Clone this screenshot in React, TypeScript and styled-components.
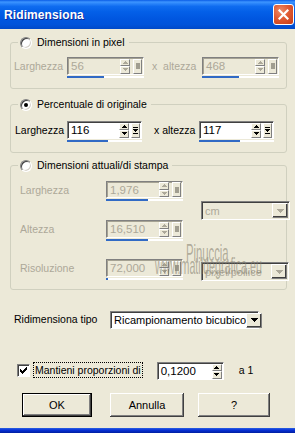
import React from 'react';
import styled, { createGlobalStyle } from 'styled-components';

const GRAY = '#ACA899';

const GlobalStyle = createGlobalStyle`
  html, body { margin: 0; padding: 0; background: #ECE9D8; }
  body { font-family: 'Liberation Sans', Arial, sans-serif; font-size: 10.5px; color: #000; }
  * { box-sizing: border-box; }
`;

const Window = styled.div`
  position: relative;
  width: 295px;
  height: 433px;
  display: flex;
  flex-direction: column;
  background: #ECE9D8;
  overflow: hidden;
`;

const TitleBar = styled.div`
  flex: none;
  height: 29px;
  display: flex;
  align-items: center;
  justify-content: space-between;
  padding: 0 1px 0 4px;
  background: linear-gradient(
    to bottom,
    #0A5CE6 0%,
    #3D95FF 7%,
    #2C86FA 12%,
    #0F6CF0 22%,
    #0460E8 40%,
    #0056E0 65%,
    #0053DA 85%,
    #0049C8 100%
  );
`;

const Title = styled.span`
  color: #fff;
  font-weight: bold;
  font-size: 12px;
  letter-spacing: 0.1px;
  text-shadow: 1px 1px 0 #0B2A9C;
  margin-top: 1px;
`;

const CloseBtn = styled.div`
  width: 21px;
  height: 21px;
  border: 1px solid #fff;
  border-radius: 3px;
  background: radial-gradient(circle at 35% 30%, #EE8A66 0%, #E05A33 45%, #C43A15 100%);
  display: flex;
  align-items: center;
  justify-content: center;
`;

const Body = styled.div`
  flex: 1;
  display: flex;
  flex-direction: column;
  padding: 7px 8px 0 10px;
`;

const Group = styled.fieldset<{ $mt: number; $pt: number; $pb: number }>`
  margin: ${p => p.$mt}px 0 0 0;
  padding: ${p => p.$pt}px 4px ${p => p.$pb}px 3px;
  border: 1px solid #D0D0BF;
  border-radius: 3px;
  min-width: 0;
`;

const Legend = styled.legend`
  margin-left: 4px;
  padding: 0 4px 0 2px;
  display: flex;
  align-items: center;
  gap: 5px;
  height: 13px;
  line-height: 13px;
  font-size: 10.5px;
`;

const Radio = styled.span<{ $checked?: boolean }>`
  position: relative;
  width: 12px;
  height: 12px;
  border-radius: 50%;
  border: 1px solid;
  border-color: #808080 #fff #fff #808080;
  box-shadow: inset 1px 1px 0 #404040, inset -1px -1px 0 #D4D0C8;
  background: #fff;
  flex: none;

  &::after {
    content: '';
    display: ${p => (p.$checked ? 'block' : 'none')};
    position: absolute;
    left: 3px;
    top: 3px;
    width: 4px;
    height: 4px;
    border-radius: 50%;
    background: #000;
  }
`;

const Row = styled.div<{ $h?: number; $mt?: number; $pl?: number }>`
  display: flex;
  align-items: flex-start;
  height: ${p => p.$h ?? 20}px;
  margin-top: ${p => p.$mt ?? 0}px;
  padding-left: ${p => p.$pl ?? 0}px;
`;

const Label = styled.span<{ $w?: number; $pl?: number; $off?: number; $disabled?: boolean }>`
  width: ${p => (p.$w ? `${p.$w}px` : 'auto')};
  flex: none;
  padding-left: ${p => p.$pl ?? 0}px;
  padding-top: ${p => p.$off ?? 3}px;
  line-height: 13px;
  white-space: pre;
  color: ${p => (p.$disabled ? GRAY : '#000')};
`;

const FieldWrap = styled.div<{ $w: number }>`
  width: ${p => p.$w}px;
  flex: none;
  display: flex;
  flex-direction: column;
`;

const Frame = styled.div<{ $disabled?: boolean; $h?: number }>`
  height: ${p => p.$h ?? 18}px;
  display: flex;
  align-items: center;
  padding-right: 1px;
  border: 1px solid;
  border-color: #808080 #fff #fff #808080;
  box-shadow: inset 1px 1px 0 ${p => (p.$disabled ? '#A5A293' : '#404040')};
  background: ${p => (p.$disabled ? '#ECE9D8' : '#fff')};
`;

const FieldText = styled.span<{ $disabled?: boolean }>`
  flex: 1;
  padding-left: 3px;
  font-size: 11.5px;
  line-height: 14px;
  color: ${p => (p.$disabled ? GRAY : '#000')};
`;

const SpinPair = styled.div`
  width: 10px;
  height: 15px;
  display: flex;
  flex-direction: column;
  flex: none;
`;

const Raised = styled.div`
  display: flex;
  align-items: center;
  justify-content: center;
  background: #ECE9D8;
  border: 1px solid;
  border-color: #fff #808080 #808080 #fff;
`;

const SpinBtn = styled(Raised)`
  flex: 1;
`;

const PopBtn = styled(Raised)<{ $gap: number }>`
  width: 9px;
  height: 15px;
  margin-left: ${p => p.$gap}px;
  flex: none;
`;

const PopSquare = styled.span`
  width: 4px;
  height: 6px;
  background: #A19E90;
`;

const Track = styled.div`
  height: 2px;
  margin-top: 1px;
  background: #fff;
`;

const TrackFill = styled.div`
  height: 100%;
  background: #316AC5;
`;

const Select = styled.div<{ $w: number; $h?: number; $disabled?: boolean; $mt?: number }>`
  width: ${p => p.$w}px;
  height: ${p => p.$h ?? 19}px;
  margin-top: ${p => p.$mt ?? 0}px;
  display: flex;
  align-items: center;
  padding: 0 1px 0 3px;
  border: 1px solid;
  border-color: #808080 #fff #fff #808080;
  box-shadow: inset 1px 1px 0 #404040;
  background: ${p => (p.$disabled ? '#ECE9D8' : '#fff')};
  color: ${p => (p.$disabled ? GRAY : '#000')};
  font-size: 11px;
  white-space: nowrap;
  flex: none;
`;

const DropBtn = styled(Raised)`
  margin-left: auto;
  width: 16px;
  height: 15px;
  flex: none;
  box-shadow: inset -1px -1px 0 #404040;
`;

const Grid = styled.div`
  margin-left: 6px;
  display: grid;
  grid-template-columns: 68px 77px 89px;
  grid-template-rows: 20px 20px 20px;
  column-gap: 18px;
  row-gap: 19px;
`;

const CheckBox = styled.span`
  width: 13px;
  height: 13px;
  margin-top: 2px;
  flex: none;
  display: flex;
  align-items: center;
  justify-content: center;
  border: 1px solid;
  border-color: #808080 #fff #fff #808080;
  box-shadow: inset 1px 1px 0 #404040;
  background: #fff;
`;

const FocusLabel = styled.span`
  margin-left: 3px;
  padding: 1px 1px 0 1px;
  height: 16px;
  line-height: 13px;
  border: 1px dotted #000;
  font-size: 10.5px;
`;

const Buttons = styled.div`
  display: flex;
  padding-left: 12px;
  margin-top: 13px;
  height: 24px;
`;

const Button = styled.button<{ $w: number; $ml?: number; $default?: boolean }>`
  width: ${p => p.$w}px;
  height: 24px;
  margin-left: ${p => p.$ml ?? 0}px;
  padding: 0;
  font-family: 'Liberation Sans', Arial, sans-serif;
  font-size: 11px;
  color: #000;
  background: #ECE9D8;
  border: ${p => (p.$default ? '1px solid #000' : 'none')};
  box-shadow: inset -1px -1px 0 #404040, inset 1px 1px 0 #fff, inset -2px -2px 0 #808080;
`;

const BottomEdge = styled.div`
  flex: none;
  height: 5px;
  background: linear-gradient(to bottom, #2D62E0 0%, #0831D9 40%, #001EA0 100%);
`;

// watermark laid over the dialog
const Watermark = styled.span<{ $x: number; $y: number; $sx: number }>`
  position: absolute;
  left: ${p => p.$x}px;
  top: ${p => p.$y}px;
  font-size: 24px;
  line-height: 24px;
  color: rgba(135, 130, 112, 0.6);
  transform: scaleX(${p => p.$sx});
  transform-origin: left top;
  white-space: nowrap;
  pointer-events: none;
`;

const Tri = ({ up, color }: { up?: boolean; color: string }) => (
  <svg width="5" height="3" viewBox="0 0 5 3" shapeRendering="crispEdges">
    {up ? (
      <>
        <rect x="2" y="0" width="1" height="1" fill={color} />
        <rect x="1" y="1" width="3" height="1" fill={color} />
        <rect x="0" y="2" width="5" height="1" fill={color} />
      </>
    ) : (
      <>
        <rect x="0" y="0" width="5" height="1" fill={color} />
        <rect x="1" y="1" width="3" height="1" fill={color} />
        <rect x="2" y="2" width="1" height="1" fill={color} />
      </>
    )}
  </svg>
);

const BigTri = ({ color }: { color: string }) => (
  <svg width="7" height="4" viewBox="0 0 7 4" shapeRendering="crispEdges">
    <rect x="0" y="0" width="7" height="1" fill={color} />
    <rect x="1" y="1" width="5" height="1" fill={color} />
    <rect x="2" y="2" width="3" height="1" fill={color} />
    <rect x="3" y="3" width="1" height="1" fill={color} />
  </svg>
);

const PopArrow = () => (
  <svg width="5" height="7" viewBox="0 0 5 7" shapeRendering="crispEdges">
    <rect x="0" y="0" width="5" height="1" fill="#000" />
    <rect x="0" y="2" width="5" height="1" fill="#000" />
    <rect x="1" y="3" width="3" height="1" fill="#000" />
    <rect x="2" y="4" width="1" height="1" fill="#000" />
    <rect x="0" y="6" width="5" height="1" fill="#000" />
  </svg>
);

type SpinProps = { value: string; width: number; disabled?: boolean; fill?: number; pop?: boolean; popGap?: number };

const SpinField = ({ value, width, disabled, fill, pop = true, popGap = 3 }: SpinProps) => {
  const c = disabled ? GRAY : '#000';
  return (
    <FieldWrap $w={width}>
      <Frame $disabled={disabled}>
        <FieldText $disabled={disabled}>{value}</FieldText>
        <SpinPair>
          <SpinBtn><Tri up color={c} /></SpinBtn>
          <SpinBtn><Tri color={c} /></SpinBtn>
        </SpinPair>
        {pop && (
          <PopBtn $gap={popGap}>{disabled ? <PopSquare /> : <PopArrow />}</PopBtn>
        )}
      </Frame>
      {fill !== undefined && (
        <Track>
          <TrackFill style={{ width: `${fill}%` }} />
        </Track>
      )}
    </FieldWrap>
  );
};

const App = () => (
  <>
    <GlobalStyle />
    <Window>
      <TitleBar>
        <Title>Ridimensiona</Title>
        <CloseBtn>
          <svg width="11" height="11" viewBox="0 0 11 11">
            <path d="M1.5 1.5L9.5 9.5M9.5 1.5L1.5 9.5" stroke="#fff" strokeWidth="2.2" strokeLinecap="square" />
          </svg>
        </CloseBtn>
      </TitleBar>

      <Body>
        <Group $mt={0} $pt={8} $pb={11}>
          <Legend><Radio />Dimensioni in pixel</Legend>
          <Row>
            <Label $w={53} $disabled>Larghezza</Label>
            <SpinField value="56" width={77} disabled fill={48} />
            <Label $w={58} $pl={8} $disabled>{'x  altezza'}</Label>
            <SpinField value="468" width={77} disabled fill={48} />
          </Row>
        </Group>

        <Group $mt={9} $pt={10} $pb={10}>
          <Legend><Radio $checked />Percentuale di originale</Legend>
          <Row $h={21}>
            <Label $w={53} $pl={1}>Larghezza</Label>
            <SpinField value="116" width={75} fill={55} popGap={2} />
            <Label $w={57} $pl={12}>x altezza</Label>
            <SpinField value="117" width={75} fill={55} popGap={2} />
          </Row>
        </Group>

        <Group $mt={6} $pt={9} $pb={10}>
          <Legend><Radio />Dimensioni attuali/di stampa</Legend>
          <Grid>
            <Label $disabled>Larghezza</Label>
            <SpinField value="1,976" width={77} disabled fill={55} />
            <Select $w={89} $disabled style={{ gridRow: '1 / span 2', gridColumn: 3, alignSelf: 'center' }}>
              cm
              <DropBtn><BigTri color={GRAY} /></DropBtn>
            </Select>
            <Label $disabled style={{ gridRow: 2, gridColumn: 1 }}>Altezza</Label>
            <div style={{ gridRow: 2, gridColumn: 2 }}>
              <SpinField value="16,510" width={77} disabled fill={55} />
            </div>
            <Label $disabled style={{ gridRow: 3, gridColumn: 1 }}>Risoluzione</Label>
            <div style={{ gridRow: 3, gridColumn: 2 }}>
              <SpinField value="72,000" width={77} disabled fill={2} />
            </div>
            <Select $w={88} $disabled $mt={3} style={{ gridRow: 3, gridColumn: 3 }}>
              pixel/pollice
              <DropBtn><BigTri color={GRAY} /></DropBtn>
            </Select>
          </Grid>
        </Group>

        <Row $h={18} $mt={21} $pl={4}>
          <Label $w={96} $off={2}>Ridimensiona tipo</Label>
          <Select $w={149} $h={18}>
            Ricampionamento bicubico
            <DropBtn><BigTri color="#000" /></DropBtn>
          </Select>
        </Row>

        <Row $h={18} $mt={33} $pl={7}>
          <CheckBox>
            <svg width="7" height="7" viewBox="0 0 7 7" shapeRendering="crispEdges">
              <path d="M0 2h1v1h1v1h1V3h1V2h1V1h1V0h1v3H6v1H5v1H4v1H3v1H2V6H1V5H0z" fill="#000" />
            </svg>
          </CheckBox>
          <FocusLabel>Mantieni proporzioni di</FocusLabel>
          <div style={{ marginLeft: 14 }}>
            <SpinField value="0,1200" width={67} pop={false} />
          </div>
          <Label $pl={15} $off={2}>a 1</Label>
        </Row>

        <Buttons>
          <Button $w={70} $default>OK</Button>
          <Button $w={74} $ml={18}>Annulla</Button>
          <Button $w={72} $ml={14}>?</Button>
        </Buttons>
      </Body>

      <BottomEdge />

      <Watermark $x={186} $y={241} $sx={0.47}>Pinuccia</Watermark>
      <Watermark $x={155} $y={254} $sx={0.445}>www.matildegrafica.eu</Watermark>
    </Window>
  </>
);

export default App;
